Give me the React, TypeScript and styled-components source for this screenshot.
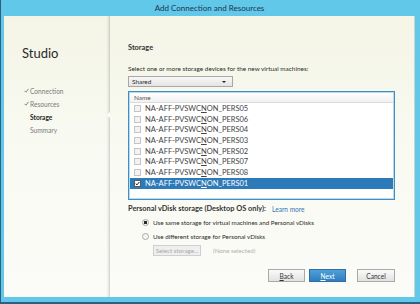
import React from "react";
import styled, { createGlobalStyle } from "styled-components";

const GlobalStyle = createGlobalStyle`
  html, body {
    margin: 0;
    padding: 0;
    background: #ffffff;
  }
  body {
    font-family: Lato, "Open Sans", sans-serif;
  }
`;

const steps = [
  { label: "Connection", done: true },
  { label: "Resources", done: true },
  { label: "Storage", current: true },
  { label: "Summary" },
];

const devices = ["05", "06", "04", "03", "02", "07", "08", "01"];

export default function App() {
  return (
    <>
      <GlobalStyle />
      <S.Window>
        <S.TitleBar>Add Connection and Resources</S.TitleBar>
        <S.Body>
          <S.Sidebar>
            <S.Brand>Studio</S.Brand>
            <S.Steps>
              {steps.map((step) => (
                <S.Step key={step.label} current={step.current}>
                  <S.Check>
                    {step.done && (
                      <svg width="5" height="5" viewBox="0 0 5 5">
                        <path d="M0.5 2.8 L1.9 4.2 L4.6 0.8" fill="none" stroke="#7a7a7a" strokeWidth="0.9" />
                      </svg>
                    )}
                  </S.Check>
                  {step.label}
                </S.Step>
              ))}
            </S.Steps>
            <S.Pointer />
          </S.Sidebar>

          <S.Main>
            <S.Heading>Storage</S.Heading>
            <S.Text>Select one or more storage devices for the new virtual machines:</S.Text>
            <S.Select>
              Shared
              <S.Caret />
            </S.Select>

            <S.List>
              <S.ListHeader>Name</S.ListHeader>
              {devices.map((n) => {
                const selected = n === "01";
                return (
                  <S.Row key={n} selected={selected}>
                    <S.Box checked={selected}>
                      {selected && (
                        <svg width="7" height="7" viewBox="0 0 7 7">
                          <path d="M1 3.6 L2.8 5.4 L6 1.4" fill="none" stroke="#1a1a1a" strokeWidth="1.4" />
                        </svg>
                      )}
                    </S.Box>
                    NA-AFF-PVSWC<u>N</u>ON_PERS{n}
                  </S.Row>
                );
              })}
            </S.List>

            <S.SectionRow>
              <S.Label>Personal vDisk storage (Desktop OS only):</S.Label>
              <S.Link>Learn more</S.Link>
            </S.SectionRow>

            <S.Option>
              <S.Radio checked />
              Use same storage for virtual machines and Personal vDisks
            </S.Option>
            <S.Option>
              <S.Radio />
              Use different storage for Personal vDisks
            </S.Option>
            <S.StorageRow>
              <S.SmallButton>Select storage...</S.SmallButton>
              <S.Muted>(None selected)</S.Muted>
            </S.StorageRow>

            <S.Footer>
              <S.Button>
                <u>B</u>ack
              </S.Button>
              <S.Button primary>
                <u>N</u>ext
              </S.Button>
              <S.Button wide>Cancel</S.Button>
            </S.Footer>
          </S.Main>
        </S.Body>
      </S.Window>
    </>
  );
}

const S = {
  Window: styled.div`
    width: 420px;
    height: 304px;
    box-sizing: border-box;
    display: flex;
    flex-direction: column;
    background: #62c8e9;
    border-left: 1px solid #2d5f80;
    border-bottom: 2px solid #2d5f80;
    padding: 0 5px 5px 3px;
  `,
  TitleBar: styled.div`
    height: 16px;
    flex: none;
    display: flex;
    align-items: center;
    justify-content: center;
    font-size: 8px;
    color: #1c3550;
  `,
  Body: styled.div`
    flex: 1;
    display: flex;
    background: linear-gradient(180deg, #f4f5e6 0%, #f8f9f0 40%, #fbfcf8 100%);
    border-right: 1px solid #c9d4cf;
  `,
  Sidebar: styled.div`
    position: relative;
    width: 106px;
    flex: none;
    box-shadow: inset -3px 0 3px -2px rgba(90, 90, 90, 0.35);
    padding: 29px 0 0 18px;
    box-sizing: border-box;
  `,
  Brand: styled.div`
    font-size: 13px;
    color: #2a2a2a;
    height: 16px;
    line-height: 16px;
  `,
  Steps: styled.div`
    margin-top: 23px;
    display: flex;
    flex-direction: column;
  `,
  Step: styled.div<{ current?: boolean }>`
    height: 13px;
    display: flex;
    align-items: center;
    font-size: 6.6px;
    color: ${(p) => (p.current ? "#1d1d1d" : "#7b7b7b")};
    font-weight: ${(p) => (p.current ? 700 : 400)};
  `,
  Check: styled.span`
    width: 6px;
    margin-left: 2px;
    display: flex;
    align-items: center;
    svg {
      display: block;
    }
  `,
  Pointer: styled.div`
    position: absolute;
    right: 0;
    top: 96px;
    width: 0;
    height: 0;
    border-top: 3px solid transparent;
    border-bottom: 3px solid transparent;
    border-right: 3px solid #ffffff;
  `,
  Main: styled.div`
    flex: 1;
    display: flex;
    flex-direction: column;
    padding: 27px 19px 0 18px;
    box-sizing: border-box;
    font-size: 6.4px;
    color: #2a2a2a;
  `,
  Heading: styled.div`
    font-size: 7.4px;
    font-weight: 700;
    height: 10px;
    line-height: 10px;
    color: #333;
  `,
  Text: styled.div`
    margin-top: 11px;
    height: 10px;
    line-height: 10px;
  `,
  Select: styled.div`
    position: relative;
    margin-top: 2px;
    width: 105px;
    height: 11px;
    box-sizing: border-box;
    border: 1px solid #a8a8a8;
    background: linear-gradient(180deg, #f7f7f7, #e4e4e4);
    padding-left: 3px;
    line-height: 9px;
  `,
  Caret: styled.span`
    position: absolute;
    right: 6px;
    top: 3.5px;
    border-left: 2px solid transparent;
    border-right: 2px solid transparent;
    border-top: 2px solid #222;
  `,
  List: styled.div`
    margin-top: 4px;
    height: 109px;
    box-sizing: border-box;
    border: 1px solid #3f8fc4;
    box-shadow: inset 0 0 0 1px #bcd9ec;
    background: #ffffff;
    display: flex;
    flex-direction: column;
    padding: 1px;
  `,
  ListHeader: styled.div`
    height: 9px;
    line-height: 9px;
    padding-left: 4px;
    font-size: 6.4px;
    color: #555;
    border-bottom: 1px solid #dcdcdc;
    background: linear-gradient(180deg, #ffffff, #f1f1f1);
    flex: none;
  `,
  Row: styled.div<{ selected?: boolean }>`
    height: 10.7px;
    flex: none;
    display: flex;
    align-items: center;
    padding-left: 4px;
    font-size: 7.5px;
    background: ${(p) => (p.selected ? "#2d7ab8" : "transparent")};
    color: ${(p) => (p.selected ? "#ffffff" : "#444")};
  `,
  Box: styled.span<{ checked?: boolean }>`
    width: 7px;
    height: 7px;
    box-sizing: border-box;
    border: 1px solid ${(p) => (p.checked ? "#5a5a5a" : "#c4c4c4")};
    background: ${(p) => (p.checked ? "#ffffff" : "#f3f3f3")};
    margin-right: 4px;
    display: flex;
    align-items: center;
    justify-content: center;
    svg {
      display: block;
    }
  `,
  SectionRow: styled.div`
    margin-top: 3px;
    height: 11px;
    display: flex;
    align-items: center;
  `,
  Label: styled.span`
    font-size: 7.4px;
    font-weight: 700;
    color: #333;
    width: 144px;
  `,
  Link: styled.span`
    color: #3577b8;
    font-size: 6.6px;
  `,
  Option: styled.div`
    margin-top: 3px;
    margin-left: 14px;
    height: 11px;
    display: flex;
    align-items: center;
    font-size: 6.3px;
  `,
  Radio: styled.span<{ checked?: boolean }>`
    width: 7px;
    height: 7px;
    border-radius: 50%;
    box-sizing: border-box;
    border: 1px solid #a9a9a9;
    background: ${(p) =>
      p.checked
        ? "radial-gradient(circle, #2a2a2a 0 1.6px, #f4f4f4 2px)"
        : "#f4f4f4"};
    margin-right: 4px;
    flex: none;
  `,
  StorageRow: styled.div`
    margin-top: 3px;
    margin-left: 25px;
    display: flex;
    align-items: center;
    height: 11px;
  `,
  SmallButton: styled.span`
    width: 48px;
    height: 11px;
    box-sizing: border-box;
    border: 1px solid #cfcfcf;
    background: #efefef;
    color: #a8a8a8;
    font-size: 6.2px;
    display: flex;
    align-items: center;
    justify-content: center;
    margin-right: 12px;
  `,
  Muted: styled.span`
    color: #b0b0b0;
    font-size: 6.2px;
  `,
  Footer: styled.div`
    margin-top: 13px;
    display: flex;
    justify-content: flex-end;
    gap: 4px;
  `,
  Button: styled.span<{ primary?: boolean; wide?: boolean }>`
    width: ${(p) => (p.wide ? 38 : 37)}px;
    height: 13px;
    box-sizing: border-box;
    margin-left: ${(p) => (p.wide ? 7 : 0)}px;
    border: 1px solid ${(p) => (p.primary ? "#2d6ea6" : "#a9a9a9")};
    background: ${(p) =>
      p.primary
        ? "linear-gradient(180deg, #4f9fd8, #2f7fbf)"
        : "linear-gradient(180deg, #fafafa, #e2e2e2)"};
    color: ${(p) => (p.primary ? "#ffffff" : "#333")};
    font-size: 6.6px;
    display: flex;
    align-items: center;
    justify-content: center;
  `,
};
